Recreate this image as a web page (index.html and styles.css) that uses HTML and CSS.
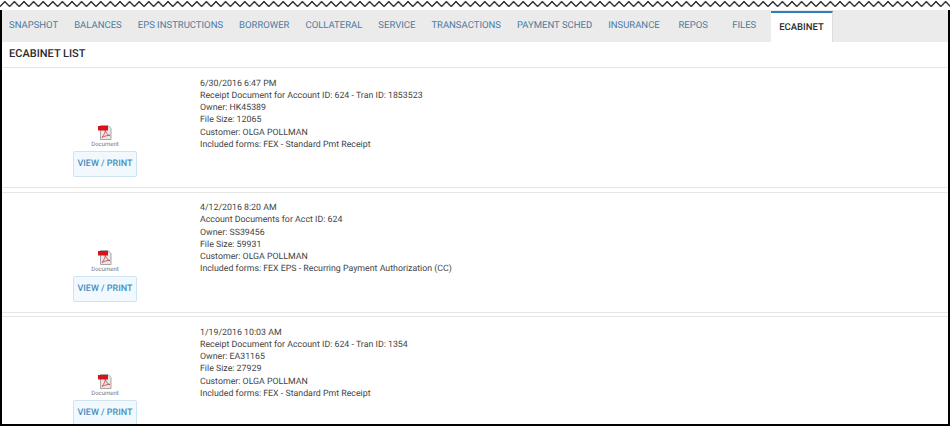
FILE: index.html
```html
<!DOCTYPE html>
<html lang="en">
<head>
    <meta charset="UTF-8">
    <title>eCabinet</title>
    <link rel="stylesheet" href="styles.css">
</head>
<body>
    <svg class="torn-edge" width="950" height="10">
        <defs>
            <pattern id="zigzag" width="9.6" height="10" patternUnits="userSpaceOnUse">
                <path d="M0 6.5 L4.8 1.5 L9.6 6.5" fill="none" stroke="#000" stroke-width="1.1"/>
            </pattern>
        </defs>
        <rect width="950" height="10" fill="url(#zigzag)"/>
    </svg>

    <div class="frame">
        <nav class="tabs">
            <a class="tab">SNAPSHOT</a>
            <a class="tab">BALANCES</a>
            <a class="tab">EPS INSTRUCTIONS</a>
            <a class="tab">BORROWER</a>
            <a class="tab">COLLATERAL</a>
            <a class="tab">SERVICE</a>
            <a class="tab">TRANSACTIONS</a>
            <a class="tab">PAYMENT SCHED</a>
            <a class="tab">INSURANCE</a>
            <a class="tab">REPOS</a>
            <a class="tab">FILES</a>
            <a class="tab active">ECABINET</a>
        </nav>

        <h2 class="list-title">ECABINET LIST</h2>

        <div class="row">
            <div class="row-body">
                <div class="doc">
                    <svg class="pdf-icon" width="14" height="15" viewBox="0 0 14 15">
                        <path d="M2.5 .5H10L13 3.5V14.5H2.5Z" fill="#e8e8e8" stroke="#a5a5a5"/>
                        <rect x="0" y="1" width="10" height="4.5" fill="#d8121a"/>
                        <path d="M4 12.5C6 10 7.5 7 7.2 5C8 8 9.5 10 12 10.5C9.5 10.3 6.5 11 4 12.5Z" fill="none" stroke="#d8383c" stroke-width=".8"/>
                    </svg>
                    <span class="doc-label">Document</span>
                    <a class="view-btn">VIEW / PRINT</a>
                </div>
                <div class="info">
                    <div>6/30/2016 6:47 PM</div>
                    <div>Receipt Document for Account ID: 624 - Tran ID: 1853523</div>
                    <div>Owner: HK45389</div>
                    <div>File Size: 12065</div>
                    <div>Customer: OLGA POLLMAN</div>
                    <div>Included forms: FEX - Standard Pmt Receipt</div>
                </div>
            </div>
        </div>

        <div class="row">
            <div class="row-body">
                <div class="doc">
                    <svg class="pdf-icon" width="14" height="15" viewBox="0 0 14 15">
                        <path d="M2.5 .5H10L13 3.5V14.5H2.5Z" fill="#e8e8e8" stroke="#a5a5a5"/>
                        <rect x="0" y="1" width="10" height="4.5" fill="#d8121a"/>
                        <path d="M4 12.5C6 10 7.5 7 7.2 5C8 8 9.5 10 12 10.5C9.5 10.3 6.5 11 4 12.5Z" fill="none" stroke="#d8383c" stroke-width=".8"/>
                    </svg>
                    <span class="doc-label">Document</span>
                    <a class="view-btn">VIEW / PRINT</a>
                </div>
                <div class="info">
                    <div>4/12/2016 8:20 AM</div>
                    <div>Account Documents for Acct ID: 624</div>
                    <div>Owner: SS39456</div>
                    <div>File Size: 59931</div>
                    <div>Customer: OLGA POLLMAN</div>
                    <div>Included forms: FEX EPS - Recurring Payment Authorization (CC)</div>
                </div>
            </div>
        </div>

        <div class="row">
            <div class="row-body">
                <div class="doc">
                    <svg class="pdf-icon" width="14" height="15" viewBox="0 0 14 15">
                        <path d="M2.5 .5H10L13 3.5V14.5H2.5Z" fill="#e8e8e8" stroke="#a5a5a5"/>
                        <rect x="0" y="1" width="10" height="4.5" fill="#d8121a"/>
                        <path d="M4 12.5C6 10 7.5 7 7.2 5C8 8 9.5 10 12 10.5C9.5 10.3 6.5 11 4 12.5Z" fill="none" stroke="#d8383c" stroke-width=".8"/>
                    </svg>
                    <span class="doc-label">Document</span>
                    <a class="view-btn">VIEW / PRINT</a>
                </div>
                <div class="info">
                    <div>1/19/2016 10:03 AM</div>
                    <div>Receipt Document for Account ID: 624 - Tran ID: 1354</div>
                    <div>Owner: EA31165</div>
                    <div>File Size: 27929</div>
                    <div>Customer: OLGA POLLMAN</div>
                    <div>Included forms: FEX - Standard Pmt Receipt</div>
                </div>
            </div>
        </div>
    </div>
</body>
</html>
```

FILE: styles.css
```css
* {
    margin: 0;
    padding: 0;
    box-sizing: border-box;
}

html, body {
    height: 426px;
    overflow: hidden;
}

body {
    font-family: Roboto, "Liberation Sans", sans-serif;
    background: white;
    color: #333;
    text-rendering: geometricPrecision;
}

.torn-edge {
    display: block;
}

.frame {
    height: 416px;
    border-left: 2px solid #000;
    border-right: 2px solid #000;
    border-bottom: 2px solid #000;
    overflow: hidden;
}

.tabs {
    display: flex;
    height: 32px;
    background: #ebebeb;
}

.tab {
    min-width: 50px;
    padding: 0 8px 0 7px;
    margin-right: 1px;
    line-height: 32px;
    font-size: 9.5px;
    text-align: center;
    color: #4a7a9f;
    white-space: nowrap;
}

.tab.active {
    margin-top: 1px;
    background: white;
    color: #2a2a2a;
    font-weight: 500;
    border-top: 2px solid #2a7fba;
    border-right: 1px solid #ddd;
    line-height: 29px;
    padding: 0 8.5px;
}

.list-title {
    height: 26px;
    line-height: 23px;
    padding-left: 7px;
    font-size: 11px;
    font-weight: 500;
    color: #2a2a2a;
    border-bottom: 1px solid #e6e6e6;
}

.row {
    height: 124.5px;
    padding-bottom: 3px;
    border-bottom: 1px solid #e6e6e6;
}

.row-body {
    display: flex;
    height: 120px;
    padding-top: 9.5px;
    border-bottom: 1px solid #e6e6e6;
}

.doc {
    width: 198px;
    padding-left: 8px;
    padding-top: 47.5px;
    display: flex;
    flex-direction: column;
    align-items: center;
    flex-shrink: 0;
}

.pdf-icon {
    display: block;
}

.doc-label {
    font-size: 6px;
    color: #777;
    line-height: 10px;
}

.view-btn {
    margin-top: 1px;
    width: 64px;
    height: 26px;
    flex-shrink: 0;
    line-height: 24px;
    text-align: center;
    font-size: 9px;
    font-weight: 500;
    color: #4a8dbd;
    background: #f2f9fe;
    border: 1px solid #cfe3f1;
    border-radius: 2px;
    white-space: nowrap;
}

.info {
    font-size: 8.8px;
    line-height: 12.25px;
    color: #444;
}
```
